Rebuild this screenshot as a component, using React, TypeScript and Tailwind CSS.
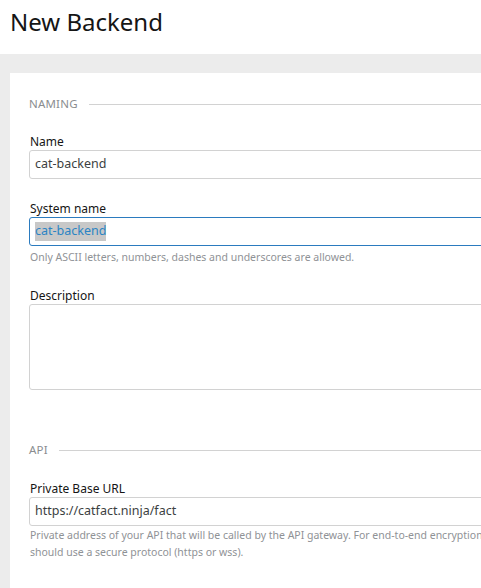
import React from "react";

const font = { fontFamily: '"Noto Sans", "Open Sans", sans-serif' };

function Section({ title }: { title: string }) {
  return (
    <div className="flex items-center h-[18px] gap-[11px]">
      <span className="text-[11.5px] leading-[18px] uppercase text-[#8a8d90] tracking-[0.2px]">{title}</span>
      <div className="flex-1 h-px bg-[#d2d2d2]" />
    </div>
  );
}

function Label({ children }: { children: React.ReactNode }) {
  return <div className="text-[12px] leading-[17px] text-[#151515] pl-px">{children}</div>;
}

function Input({ children, focused }: { children?: React.ReactNode; focused?: boolean }) {
  return (
    <div
      className={
        "h-[29px] flex items-center px-[5px] text-[12.5px] rounded-l-[3px] border bg-white " +
        (focused ? "border-[#2b7bbf]" : "border-[#d2d2d2]")
      }
    >
      {children}
    </div>
  );
}

function Helper({ children }: { children: React.ReactNode }) {
  return <div className="text-[10.5px] leading-[17px] text-[#8f9296] pl-px whitespace-nowrap">{children}</div>;
}

export default function App() {
  return (
    <div className="w-[481px] h-[588px] overflow-hidden bg-[#ececec]" style={font}>
      <div className="h-[54px] bg-white px-[10px] pt-[6px]">
        <h1 className="text-[24px] leading-[32px] text-[#151515]">New Backend</h1>
      </div>
      <div className="pt-[19px] pl-[10px]">
        <div className="w-[700px] h-[600px] bg-white pl-[19px] pt-[22px]">
          <Section title="Naming" />
          <div className="mt-[20px]">
            <Label>Name</Label>
            <Input>
              <span className="text-[#3c3f42]">cat-backend</span>
            </Input>
          </div>
          <div className="mt-[21px]">
            <Label>System name</Label>
            <Input focused>
              <span className="bg-[#c8c8c8] text-[#2b84c4]">cat-backend</span>
            </Input>
            <div className="mt-[3px]">
              <Helper>Only ASCII letters, numbers, dashes and underscores are allowed.</Helper>
            </div>
          </div>
          <div className="mt-[21px]">
            <Label>Description</Label>
            <div className="h-[86px] border border-[#d2d2d2] rounded-l-[3px]" />
          </div>
          <div className="mt-[51px]">
            <Section title="API" />
          </div>
          <div className="mt-[21px]">
            <Label>Private Base URL</Label>
            <Input>
              <span className="text-[#3c3f42]">https://catfact.ninja/fact</span>
            </Input>
            <div className="mt-px">
              <Helper>
                Private address of your API that will be called by the API gateway. For end-to-end encryption, your private base URL scheme
              </Helper>
              <Helper>should use a secure protocol (https or wss).</Helper>
            </div>
          </div>
        </div>
      </div>
    </div>
  );
}
